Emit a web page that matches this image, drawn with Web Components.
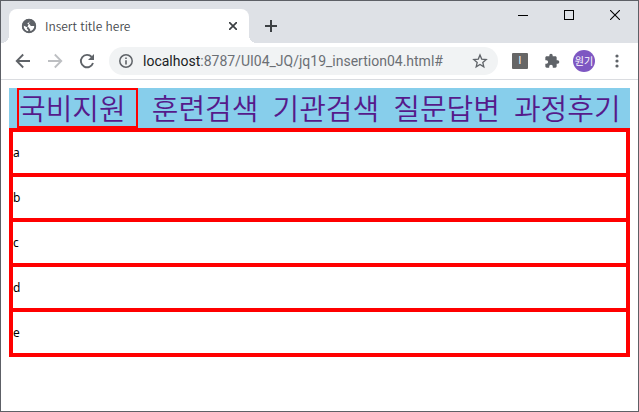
<!DOCTYPE html>
<html lang="ko">
<head>
<meta charset="utf-8">
<title>Insert title here</title>
<style>
html, body { margin: 0; height: 100%; }
body { font-family: "Noto Sans", "Noto Sans CJK KR", sans-serif; background: #fff; }
</style>
</head>
<body>
<browser-window>
  <tab-strip slot="tabs"><browser-tab>Insert title here</browser-tab></tab-strip>
  <tool-bar slot="tools" host="localhost" path=":8787/UI04_JQ/jq19_insertion04.html#"></tool-bar>
  <nav-menu>
    <nav-item current>국비지원</nav-item>
    <nav-item>훈련검색</nav-item>
    <nav-item>기관검색</nav-item>
    <nav-item>질문답변</nav-item>
    <nav-item>과정후기</nav-item>
  </nav-menu>
  <row-list>
    <row-item>a</row-item>
    <row-item>b</row-item>
    <row-item>c</row-item>
    <row-item>d</row-item>
    <row-item>e</row-item>
  </row-list>
</browser-window>
<script>
const define = (name, html, setup) => {
  const template = document.createElement('template');
  template.innerHTML = html;
  customElements.define(name, class extends HTMLElement {
    constructor() {
      super();
      this.attachShadow({ mode: 'open' }).append(template.content.cloneNode(true));
    }
    connectedCallback() { if (setup) setup(this, this.shadowRoot); }
  });
};

define('browser-window', `
<style>
:host { display: flex; flex-direction: column; box-sizing: border-box; min-height: 100%; border: 1px solid #5d6066; background: #fff; }
main { padding: 8px; flex: 1; }
</style>
<slot name="tabs"></slot>
<slot name="tools"></slot>
<main><slot></slot></main>`);

define('tab-strip', `
<style>
:host { display: flex; align-items: flex-start; background: #dee1e6; padding: 0 0 0 8px; height: 42px; }
button { border: 0; padding: 0; background: none; display: grid; place-items: center; color: #3c4043; }
.add { width: 28px; height: 28px; margin: 11px 0 0 8px; }
.controls { display: flex; margin-left: auto; color: #000; }
.controls button { width: 46px; height: 28px; color: #000; }
.controls svg { shape-rendering: crispEdges; }
</style>
<slot></slot>
<button class="add" aria-label="New tab"><svg width="12" height="12" viewBox="0 0 12 12" fill="none" stroke="currentColor" stroke-width="2"><path d="M6 0v12M0 6h12"/></svg></button>
<div class="controls">
<button aria-label="Minimize"><svg width="10" height="10" viewBox="0 0 10 10" fill="none" stroke="currentColor"><path d="M0 5.5h10"/></svg></button>
<button aria-label="Maximize"><svg width="10" height="10" viewBox="0 0 10 10" fill="none" stroke="currentColor"><path d="M.5.5h9v9h-9z"/></svg></button>
<button aria-label="Close window"><svg style="shape-rendering:auto" width="10" height="10" viewBox="0 0 10 10" fill="none" stroke="currentColor" stroke-width="1.1"><path d="M0 0l10 10M10 0L0 10"/></svg></button>
</div>`);

define('browser-tab', `
<style>
:host { position: relative; display: flex; align-items: center; box-sizing: border-box; flex: 0 1 240px; height: 34px; margin-top: 8px; padding: 0 12px; border-radius: 8px 8px 0 0; background: #fff; color: #3c4043; }
:host::before, :host::after { content: ""; position: absolute; bottom: 0; width: 8px; height: 8px; }
:host::before { left: -8px; background: radial-gradient(circle at 0 0, transparent 8px, #fff 8px); }
:host::after { right: -8px; background: radial-gradient(circle at 100% 0, transparent 8px, #fff 8px); }
span { flex: 1; margin-left: 8px; white-space: nowrap; color: #45484c; font: 350 12px/16px "Noto Sans CJK KR", sans-serif; }
button { border: 0; padding: 0; background: none; width: 8px; height: 14px; display: grid; place-items: center; color: #3c4043; }
</style>
<svg width="16" height="16" viewBox="0 0 16 16"><circle cx="8" cy="8" r="7.1" fill="#5f6368"/><path d="M9.300 2.400L8.900 4.200 6.500 4.900 6.700 6.100 8.800 6.300 9.700 8H13.600C13.300 10.600 11.800 12.500 9.600 13.200L9.100 12V10.900L7.900 10.200 7.500 8.900H5.500L2.500 7.600C2.200 10.600 4 12.900 6.900 13.500L7.300 12 5.800 10.800 6 9.900" fill="#fff"/><circle cx="8" cy="8" r="6.3" fill="none" stroke="#5f6368" stroke-width="1.700"/></svg>
<span><slot></slot></span>
<button aria-label="Close tab"><svg width="8" height="8" viewBox="0 0 8 8" stroke="currentColor" stroke-width="1.700"><path d="M0 0l8 8M8 0L0 8"/></svg></button>`);

define('tool-bar', `
<style>
:host { display: flex; align-items: center; height: 36px; padding: 0 4px 0 6px; border-bottom: 1px solid #dadce0; background: #fff; }
button { border: 0; padding: 0; background: none; flex: none; width: 32px; height: 28px; display: grid; place-items: center; color: #5f6368; }
button[disabled] { color: #bdbfc2; }
.address { display: flex; align-items: center; flex: 1; min-width: 0; height: 28px; margin: 0 6px; border-radius: 14px; background: #f1f3f4; color: #5f6368; }
.address button:first-child { width: 34px; }
.url { flex: 1; white-space: nowrap; overflow: hidden; font: 14px/20px Roboto, sans-serif; color: #6b6f74; }
.url b { font-weight: 400; color: #202124; }
.address button:last-child { width: 36px; }
.ext i { display: grid; place-items: center; width: 16px; height: 16px; border-radius: 1px; background: #666; color: #fff; font: 10px/16px "Liberation Sans", sans-serif; }
.avatar span { display: grid; place-items: center; width: 22px; height: 22px; border-radius: 50%; background: #7e57c2; color: #fff; font: 10px/22px "Noto Sans CJK KR", sans-serif; }
.menu { width: 34px; }
</style>
<button aria-label="Back"><svg width="16" height="16" viewBox="0 0 16 16" fill="none" stroke="currentColor" stroke-width="1.800"><path d="M15 8H2M8.200 1.500L1.700 8l6.500 6.500"/></svg></button>
<button aria-label="Forward" disabled><svg width="16" height="16" viewBox="0 0 16 16" fill="none" stroke="currentColor" stroke-width="1.800"><path d="M1 8h13M7.800 1.500L14.300 8l-6.500 6.500"/></svg></button>
<button aria-label="Reload"><svg width="16" height="16" viewBox="0 0 16 16"><path d="M12.700 3.900A6.200 6.200 0 1 0 14 10" fill="none" stroke="currentColor" stroke-width="1.900"/><path d="M15 1v6H9z" fill="currentColor"/></svg></button>
<div class="address">
<button aria-label="Site information"><svg width="14" height="14" viewBox="0 0 14 14"><circle cx="7" cy="7" r="6.200" fill="none" stroke="currentColor" stroke-width="1.500"/><path d="M7 6.200v4.200M7 3.500v1.600" stroke="currentColor" stroke-width="1.600"/></svg></button>
<div class="url"><b></b><span></span></div>
<button aria-label="Bookmark"><svg width="16" height="16" viewBox="0 0 16 16"><path d="M8 2l1.700 4.100 4.500.4-3.400 2.900 1 4.400L8 11.400l-3.800 2.400 1-4.400-3.400-2.900 4.500-.4z" fill="none" stroke="currentColor" stroke-width="1.300"/></svg></button>
</div>
<button class="ext" aria-label="Extension"><i>I</i></button>
<button aria-label="Extensions"><svg width="16" height="16" viewBox="0 0 24 24"><path fill="currentColor" d="M20.500 11H19V7c0-1.100-.9-2-2-2h-4V3.500a2.500 2.500 0 0 0-5 0V5H4c-1.100 0-2 .9-2 2v3.800h1.500a2.700 2.700 0 0 1 0 5.400H2V20c0 1.100.9 2 2 2h3.800v-1.500a2.700 2.700 0 0 1 5.400 0V22H17c1.100 0 2-.9 2-2v-4h1.500a2.500 2.500 0 0 0 0-5z"/></svg></button>
<button class="avatar" aria-label="Profile"><span>원기</span></button>
<button class="menu" aria-label="Menu"><svg width="4" height="14" viewBox="0 0 4 14" fill="currentColor"><circle cx="2" cy="2" r="1.600"/><circle cx="2" cy="7" r="1.600"/><circle cx="2" cy="12" r="1.600"/></svg></button>`,
(el, root) => {
  root.querySelector('.url b').textContent = el.getAttribute('host');
  root.querySelector('.url span').textContent = el.getAttribute('path');
});

define('nav-menu', `
<style>
:host { display: block; background: skyblue; }
nav { display: flex; gap: 14px; padding-left: 8px; height: 40px; }
</style>
<nav><slot></slot></nav>`);

define('nav-item', `
<style>
:host { display: block; box-sizing: border-box; flex: none; padding: 2px 0; }
:host([current]) { border: 2px solid red; padding: 0 10px 0 0; }
a { display: block; color: #551a8b; text-decoration: none; font: 350 29px/34px "Noto Sans CJK KR", sans-serif; white-space: nowrap; }
</style>
<a href="#"><slot></slot></a>`);

define('row-list', `
<style>
:host { display: block; border: 4px solid red; border-top: 0; }
</style>
<div role="list"><slot></slot></div>`);

define('row-item', `
<style>
:host { display: flex; align-items: center; height: 41px; border-top: 4px solid red; color: #000; font: 12px/16px "Noto Sans", sans-serif; }
</style>
<div role="listitem"><slot></slot></div>`);
</script>
</body>
</html>
